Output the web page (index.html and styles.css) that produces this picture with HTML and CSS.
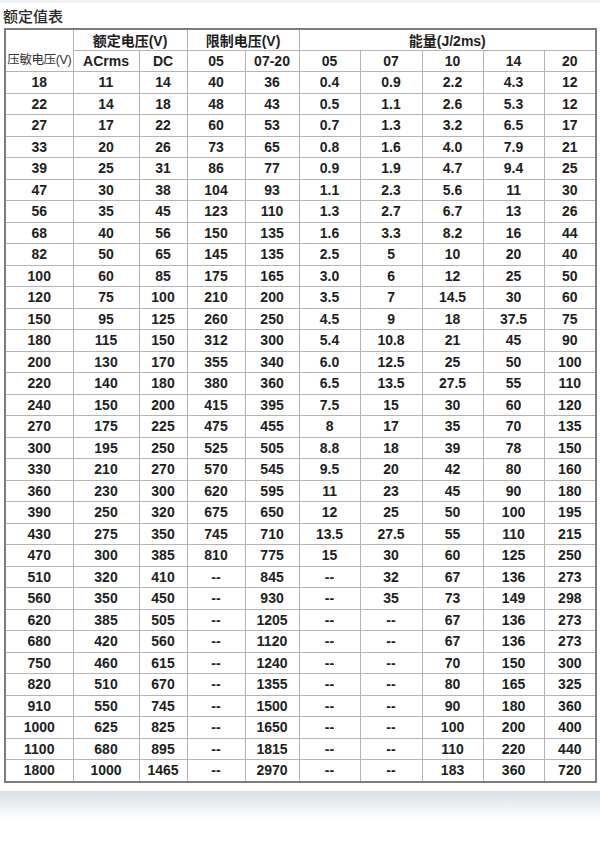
FILE: index.html
```html
<!DOCTYPE html>
<html lang="zh">
<head>
<meta charset="utf-8">
<title>额定值表</title>
<link rel="stylesheet" href="styles.css">
</head>
<body>
<div class="topband"></div>
<div class="title">额定值表</div>
<table class="spec">
  <colgroup>
    <col class="c1"><col class="c2"><col class="c3"><col class="c4"><col class="c5">
    <col class="c6"><col class="c7"><col class="c8"><col class="c9"><col class="c10">
  </colgroup>
  <thead>
    <tr class="h1">
      <th rowspan="2" class="vlabel">压敏电压(V)</th>
      <th colspan="2">额定电压(V)</th>
      <th colspan="2">限制电压(V)</th>
      <th colspan="5">能量(J/2ms)</th>
    </tr>
    <tr class="h2">
      <th>ACrms</th><th>DC</th><th>05</th><th>07-20</th>
      <th>05</th><th>07</th><th>10</th><th>14</th><th>20</th>
    </tr>
  </thead>
  <tbody>
    <tr><td>18</td><td>11</td><td>14</td><td>40</td><td>36</td><td>0.4</td><td>0.9</td><td>2.2</td><td>4.3</td><td>12</td></tr>
    <tr><td>22</td><td>14</td><td>18</td><td>48</td><td>43</td><td>0.5</td><td>1.1</td><td>2.6</td><td>5.3</td><td>12</td></tr>
    <tr><td>27</td><td>17</td><td>22</td><td>60</td><td>53</td><td>0.7</td><td>1.3</td><td>3.2</td><td>6.5</td><td>17</td></tr>
    <tr><td>33</td><td>20</td><td>26</td><td>73</td><td>65</td><td>0.8</td><td>1.6</td><td>4.0</td><td>7.9</td><td>21</td></tr>
    <tr><td>39</td><td>25</td><td>31</td><td>86</td><td>77</td><td>0.9</td><td>1.9</td><td>4.7</td><td>9.4</td><td>25</td></tr>
    <tr><td>47</td><td>30</td><td>38</td><td>104</td><td>93</td><td>1.1</td><td>2.3</td><td>5.6</td><td>11</td><td>30</td></tr>
    <tr><td>56</td><td>35</td><td>45</td><td>123</td><td>110</td><td>1.3</td><td>2.7</td><td>6.7</td><td>13</td><td>26</td></tr>
    <tr><td>68</td><td>40</td><td>56</td><td>150</td><td>135</td><td>1.6</td><td>3.3</td><td>8.2</td><td>16</td><td>44</td></tr>
    <tr><td>82</td><td>50</td><td>65</td><td>145</td><td>135</td><td>2.5</td><td>5</td><td>10</td><td>20</td><td>40</td></tr>
    <tr><td>100</td><td>60</td><td>85</td><td>175</td><td>165</td><td>3.0</td><td>6</td><td>12</td><td>25</td><td>50</td></tr>
    <tr><td>120</td><td>75</td><td>100</td><td>210</td><td>200</td><td>3.5</td><td>7</td><td>14.5</td><td>30</td><td>60</td></tr>
    <tr><td>150</td><td>95</td><td>125</td><td>260</td><td>250</td><td>4.5</td><td>9</td><td>18</td><td>37.5</td><td>75</td></tr>
    <tr><td>180</td><td>115</td><td>150</td><td>312</td><td>300</td><td>5.4</td><td>10.8</td><td>21</td><td>45</td><td>90</td></tr>
    <tr><td>200</td><td>130</td><td>170</td><td>355</td><td>340</td><td>6.0</td><td>12.5</td><td>25</td><td>50</td><td>100</td></tr>
    <tr><td>220</td><td>140</td><td>180</td><td>380</td><td>360</td><td>6.5</td><td>13.5</td><td>27.5</td><td>55</td><td>110</td></tr>
    <tr><td>240</td><td>150</td><td>200</td><td>415</td><td>395</td><td>7.5</td><td>15</td><td>30</td><td>60</td><td>120</td></tr>
    <tr><td>270</td><td>175</td><td>225</td><td>475</td><td>455</td><td>8</td><td>17</td><td>35</td><td>70</td><td>135</td></tr>
    <tr><td>300</td><td>195</td><td>250</td><td>525</td><td>505</td><td>8.8</td><td>18</td><td>39</td><td>78</td><td>150</td></tr>
    <tr><td>330</td><td>210</td><td>270</td><td>570</td><td>545</td><td>9.5</td><td>20</td><td>42</td><td>80</td><td>160</td></tr>
    <tr><td>360</td><td>230</td><td>300</td><td>620</td><td>595</td><td>11</td><td>23</td><td>45</td><td>90</td><td>180</td></tr>
    <tr><td>390</td><td>250</td><td>320</td><td>675</td><td>650</td><td>12</td><td>25</td><td>50</td><td>100</td><td>195</td></tr>
    <tr><td>430</td><td>275</td><td>350</td><td>745</td><td>710</td><td>13.5</td><td>27.5</td><td>55</td><td>110</td><td>215</td></tr>
    <tr><td>470</td><td>300</td><td>385</td><td>810</td><td>775</td><td>15</td><td>30</td><td>60</td><td>125</td><td>250</td></tr>
    <tr><td>510</td><td>320</td><td>410</td><td>--</td><td>845</td><td>--</td><td>32</td><td>67</td><td>136</td><td>273</td></tr>
    <tr><td>560</td><td>350</td><td>450</td><td>--</td><td>930</td><td>--</td><td>35</td><td>73</td><td>149</td><td>298</td></tr>
    <tr><td>620</td><td>385</td><td>505</td><td>--</td><td>1205</td><td>--</td><td>--</td><td>67</td><td>136</td><td>273</td></tr>
    <tr><td>680</td><td>420</td><td>560</td><td>--</td><td>1120</td><td>--</td><td>--</td><td>67</td><td>136</td><td>273</td></tr>
    <tr><td>750</td><td>460</td><td>615</td><td>--</td><td>1240</td><td>--</td><td>--</td><td>70</td><td>150</td><td>300</td></tr>
    <tr><td>820</td><td>510</td><td>670</td><td>--</td><td>1355</td><td>--</td><td>--</td><td>80</td><td>165</td><td>325</td></tr>
    <tr><td>910</td><td>550</td><td>745</td><td>--</td><td>1500</td><td>--</td><td>--</td><td>90</td><td>180</td><td>360</td></tr>
    <tr><td>1000</td><td>625</td><td>825</td><td>--</td><td>1650</td><td>--</td><td>--</td><td>100</td><td>200</td><td>400</td></tr>
    <tr><td>1100</td><td>680</td><td>895</td><td>--</td><td>1815</td><td>--</td><td>--</td><td>110</td><td>220</td><td>440</td></tr>
    <tr><td>1800</td><td>1000</td><td>1465</td><td>--</td><td>2970</td><td>--</td><td>--</td><td>183</td><td>360</td><td>720</td></tr>
  </tbody>
</table>
<div class="shadow"></div>
</body>
</html>
```
FILE: styles.css
```css
html, body {
  margin: 0;
  padding: 0;
  background: #ffffff;
}
body {
  width: 600px;
  font-family: "Liberation Sans", Arial, "Noto Sans CJK SC", sans-serif;
  color: #1e1e1e;
}
.topband {
  height: 3px;
  background: #eef1f5;
}
.title {
  height: 25px;
  padding-left: 3px;
  font-family: "Noto Sans CJK SC", sans-serif;
  font-size: 15px;
  font-weight: 500;
  line-height: 26px;
  color: #2a2a2a;
}
.spec {
  margin-left: 4px;
  width: 592px;
  table-layout: fixed;
  border-collapse: collapse;
  border: 2px solid #7d7d7d;
}
.c1 { width: 68px; }
.c2 { width: 66px; }
.c3 { width: 48px; }
.c4 { width: 58px; }
.c5 { width: 54px; }
.c6 { width: 61px; }
.c7 { width: 62px; }
.c8 { width: 61px; }
.c9 { width: 61px; }
.c10 { width: 52px; }
.spec th, .spec td {
  border: 1px solid #b4b4b4;
  padding: 0;
  text-align: center;
  font-size: 14px;
  font-weight: bold;
  white-space: nowrap;
  overflow: hidden;
}
.spec thead th {
  font-family: "Liberation Sans", Arial, "Noto Sans CJK SC", sans-serif;
}
.h1 th {
  height: 20px;
  font-weight: 600;
}
.h2 th {
  height: 20px;
}
.spec th.vlabel {
  font-weight: normal;
  font-size: 12.5px;
  letter-spacing: -0.4px;
  vertical-align: bottom;
  padding-bottom: 3px;
  color: #333;
}
.spec tbody td {
  height: 20.5px;
}
.shadow {
  height: 28px;
  margin-top: 8px;
  background: linear-gradient(#d9dfe6, #ffffff);
}
```
